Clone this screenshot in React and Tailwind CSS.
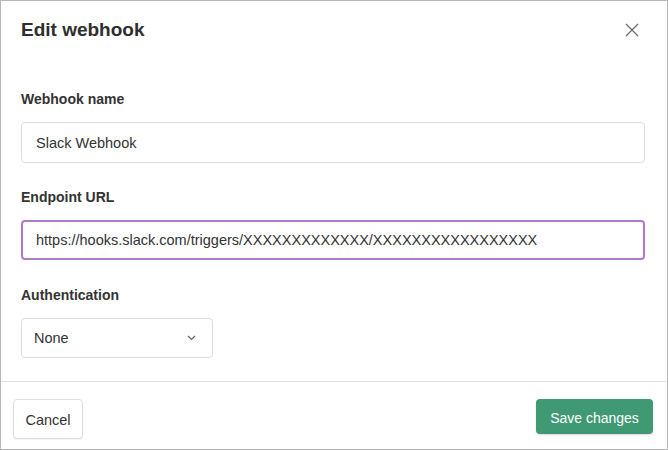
import React from 'react';

export default function App() {
  return (
    <div className="w-[668px] h-[450px] border border-[#b8b8b8] bg-white flex flex-col font-['Liberation_Sans',Arial,sans-serif] text-[#333]">
      <div className="h-[58px] flex items-center justify-between pl-[20px] pr-[28px]">
        <h1 className="text-[19px] font-bold text-[#2e2e2e]">Edit webhook</h1>
        <button className="w-[14px] h-[14px] flex items-center justify-center">
          <svg width="14" height="14" viewBox="0 0 14 14" fill="none" stroke="#6b6b6b" strokeWidth="1.3">
            <path d="M1 1L13 13M13 1L1 13" />
          </svg>
        </button>
      </div>

      <div className="flex-1 pl-[20px] pr-[22px] pt-[30px]">
        <label className="block text-[14px] leading-[20px] font-bold text-[#333]">Webhook name</label>
        <div className="mt-[13px] h-[41px] border border-[#dedede] rounded-[4px] flex items-center px-[14px] pt-[3px] text-[14.5px]">
          Slack Webhook
        </div>

        <label className="block mt-[24px] text-[14px] leading-[20px] font-bold text-[#333]">Endpoint URL</label>
        <div className="mt-[13px] h-[40px] border-2 border-[#b07acc] rounded-[4px] flex items-center px-[13px] pt-[2px] text-[14.5px] whitespace-nowrap">
          https://hooks.slack.com/triggers/XXXXXXXXXXXXX/XXXXXXXXXXXXXXXXX
        </div>

        <label className="block mt-[25px] text-[14px] leading-[20px] font-bold text-[#333]">Authentication</label>
        <div className="mt-[13px] w-[192px] h-[40px] border border-[#dedede] rounded-[4px] flex items-center justify-between pl-[12px] pr-[16px] text-[14.5px]">
          <span className="pt-[2px]">None</span>
          <svg width="9" height="6" viewBox="0 0 9 6" fill="none" stroke="#666" strokeWidth="1.2">
            <path d="M1 1L4.5 4.5L8 1" />
          </svg>
        </div>
      </div>

      <div className="h-[68px] border-t border-[#e2e2e2] flex items-start justify-between pl-[12px] pr-[14px] pt-[17px]">
        <button className="w-[70px] h-[40px] border border-[#dedede] rounded-[4px] shadow-[0_1px_1px_rgba(0,0,0,0.06)] pt-[3px] text-[14.5px] text-[#333]">
          Cancel
        </button>
        <button className="w-[117px] h-[35px] rounded-[4px] bg-[#3f9a73] shadow-[0_1px_2px_rgba(0,0,0,0.15)] pt-[3px] text-[14px] text-white">
          Save changes
        </button>
      </div>
    </div>
  );
}
